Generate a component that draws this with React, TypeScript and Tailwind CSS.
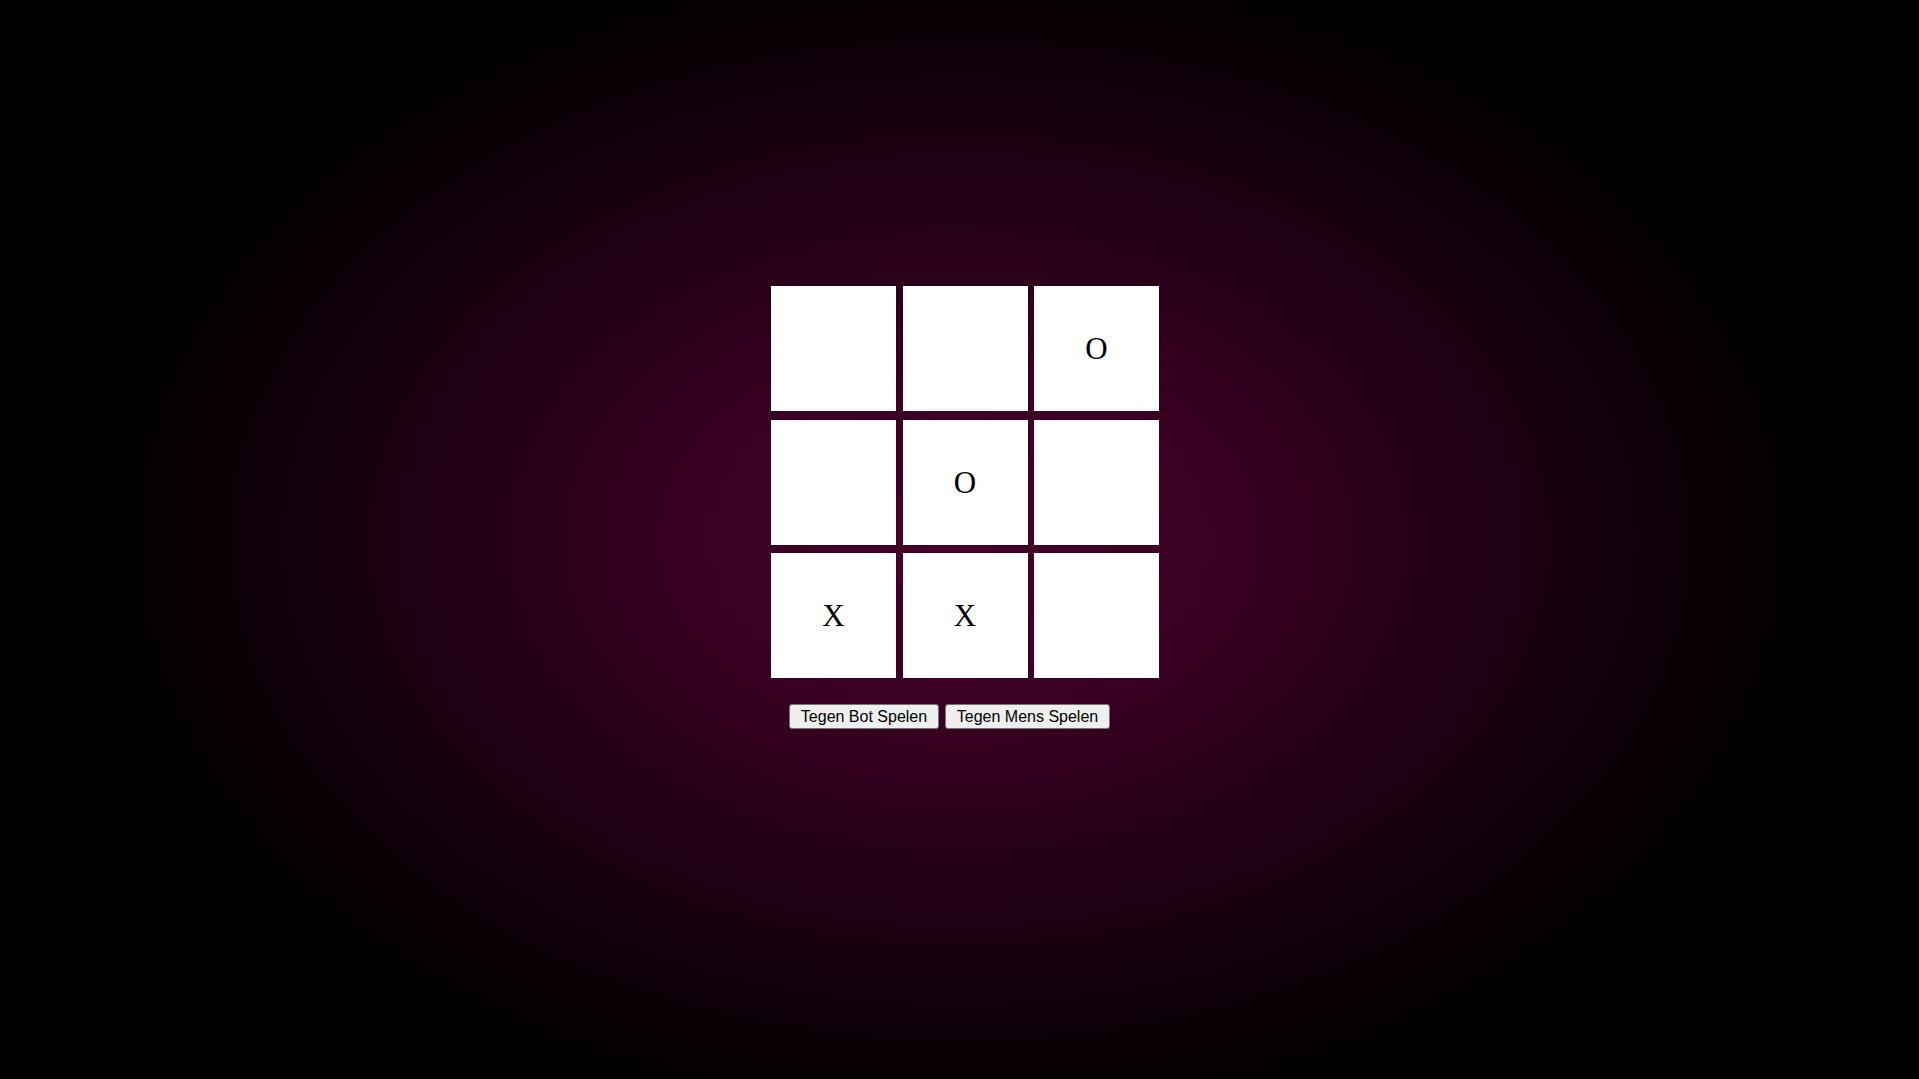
import React from 'react';

const board = ['', '', 'O', '', 'O', '', 'X', 'X', ''];

const App = () => {
  return (
    <div className="min-h-screen w-full bg-[radial-gradient(860px_590px_at_center,#45002a_0%,#3c0024_27%,#000000_100%)] pt-[286px] pl-[771px] font-['Liberation_Serif',serif]">
      {/* Board */}
      <div className="grid grid-cols-[125px_125px_125px] grid-rows-[125px_125px_125px] gap-x-[6.5px] gap-y-[8.5px] w-max">
        {board.map((cell, index) => (
          <div
            key={index}
            className="bg-white flex items-center justify-center text-[31px] leading-none text-black cursor-pointer"
          >
            {cell}
          </div>
        ))}
      </div>

      {/* Mode buttons */}
      <div className="flex gap-[6px] mt-[26px] ml-[18px] font-['Liberation_Sans',Arial,sans-serif]">
        <button className="w-[150px] h-[25px] bg-[#efefef] border border-[#767676] rounded-[3px] text-[16px] text-black text-center leading-none">
          Tegen Bot Spelen
        </button>
        <button className="w-[165px] h-[25px] bg-[#efefef] border border-[#767676] rounded-[3px] text-[16px] text-black text-center leading-none">
          Tegen Mens Spelen
        </button>
      </div>
    </div>
  );
};

export default App;
